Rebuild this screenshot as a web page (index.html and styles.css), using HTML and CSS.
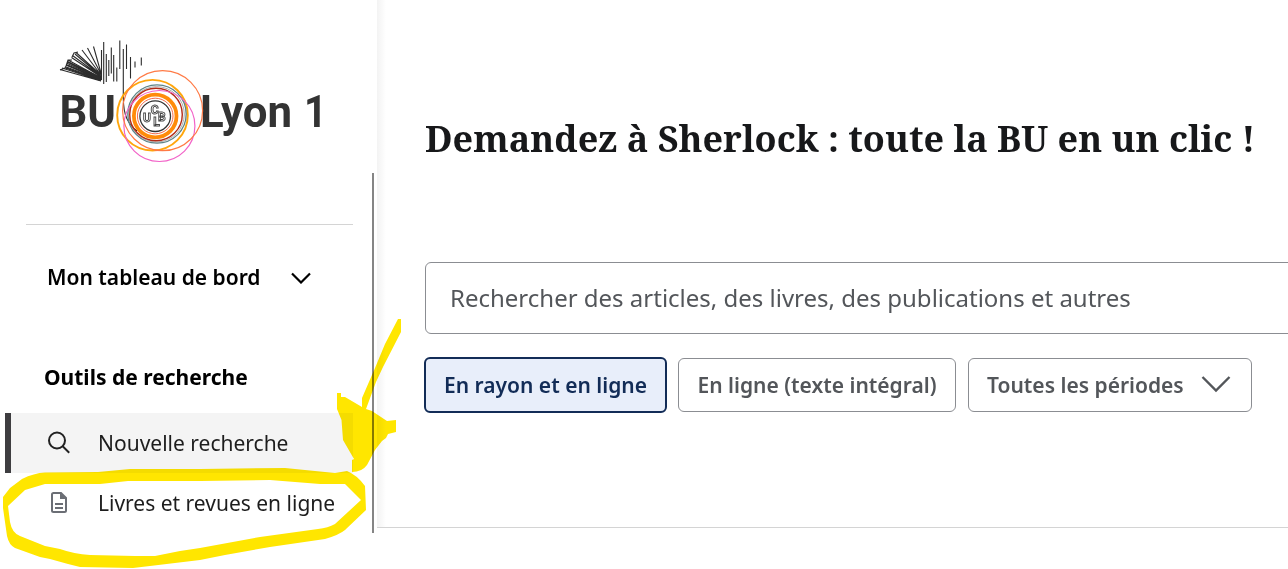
FILE: index.html
```html
<!DOCTYPE html>
<html lang="fr">
<head>
    <meta charset="UTF-8">
    <meta name="viewport" content="width=device-width, initial-scale=1.0">
    <title>BU Lyon 1</title>
    <link rel="stylesheet" href="styles.css">
</head>
<body>
    <div class="page">
        <aside class="sidebar">
            <svg class="logo" viewBox="40 30 300 145" width="300" height="145">
                <!-- livre ouvert -->
                <g class="logo-book">
                    <path d="M101 81L60 69.500M101 80.500L62 68M101 80L65 66.500M101 79.500L66 65M101 79L66.500 63M101 78.500L67 61.500M101 78L68 60M101 77L71.500 57.500M101 76.500L72.500 55.500M101 76L75 54M101 75L76 52.500M101 75L82 50M101 74L87.500 48M101 73L93.500 46.500M60 70L66 67.500M66 66L68 60L72 60M72 57L74 53L78 52"/>
                    <path class="thick" d="M66 68L101 80.500M67 65L101 79M68 62L101 78M90 75L101 80.500"/>
                    <path d="M103.700 42V84M101.500 50V80M106.300 54V82M108.800 60V76M111.300 47.500V73.500M113.700 55V81.500M116.800 67.500V81.500M119.800 40.500V69M126.500 44.500V69M130.500 57V78.500M135 61.500V67.500M141.300 57.500V65.500"/>
                    <path d="M123.300 49V98C123.500 116 128 124 137 131"/>
                </g>
                <text class="logo-text" x="59.500" y="126.500" textLength="56.500" lengthAdjust="spacingAndGlyphs">BU</text>
                <text class="logo-text" x="200" y="126.500" textLength="92" lengthAdjust="spacingAndGlyphs">Lyon</text>
                <text class="logo-text" x="304" y="126.500" textLength="23" lengthAdjust="spacingAndGlyphs">1</text>
                <g fill="none">
                    <circle cx="152.500" cy="115.200" r="35.300" stroke="#ffa60c" stroke-width="1.900"/>
                    <circle cx="157" cy="114" r="29.200" stroke="#5d8487" stroke-width="1.300"/>
                    <circle cx="156.600" cy="114.300" r="27.700" stroke="#777" stroke-width=".6"/>
                    <circle cx="156" cy="114.500" r="26.300" stroke="#b22a17" stroke-width="1.400"/>
                    <circle cx="159.400" cy="126" r="35.500" stroke="#f263c8" stroke-width="1.200"/>
                    <circle cx="162.600" cy="110.700" r="40" stroke="#ff7a45" stroke-width="1.200"/>
                    <circle cx="155.200" cy="116" r="21.300" stroke="#ff8b0a" stroke-width="3.800"/>
                    <circle cx="155.200" cy="116" r="17.800" stroke="#ef5a38" stroke-width=".9"/>
                    <circle cx="155.200" cy="116.200" r="15.300" stroke="#333" stroke-width="1.300"/>
                </g>
                <g class="logo-letters">
                    <text x="143" y="121.800">U</text>
                    <text x="150.800" y="114.200">C</text>
                    <text x="153.300" y="126">L</text>
                    <text x="158" y="121">B</text>
                </g>
            </svg>
            <hr class="separator">
            <div class="dashboard">
                <span>Mon tableau de bord</span>
                <svg width="20" height="12" viewBox="0 0 20 12"><path d="M1 1.500L10 10.500L19 1.500"/></svg>
            </div>
            <h2>Outils de recherche</h2>
            <nav>
                <a class="item active">
                    <svg width="24" height="24" viewBox="0 0 24 24"><circle cx="10" cy="9.500" r="8"/><path d="M15.700 15.200L22.200 21.700"/></svg>
                    <span>Nouvelle recherche</span>
                </a>
                <a class="item">
                    <svg class="doc" width="24" height="24" viewBox="0 0 24 24"><path d="M6 2H14L19 7V19.500Q19 21 17.500 21H6.500Q5 21 5 19.500V3.500Q5 2 6.500 2ZM8 13H16M8 17H16"/><path class="fold" d="M13 1.500V8H19.500Z"/></svg>
                    <span>Livres et revues en ligne</span>
                </a>
            </nav>
            <div class="scrollbar"></div>
        </aside>
        <main class="content">
            <h1>Demandez à Sherlock : toute la BU en un clic !</h1>
            <input class="search" type="text" placeholder="Rechercher des articles, des livres, des publications et autres">
            <div class="filters">
                <button class="selected">En rayon et en ligne</button>
                <button class="fulltext">En ligne (texte intégral)</button>
                <button class="period">
                    <span>Toutes les périodes</span>
                    <svg width="30" height="18" viewBox="0 0 30 18"><path d="M1.500 1L15 14.500L28.500 1"/></svg>
                </button>
            </div>
        </main>
    </div>

    <!-- surlignage -->
    <svg class="highlight" width="420" height="569" viewBox="0 0 420 569">
        <path fill-rule="evenodd" d="M3 497L10 488L22 479Q34 473 45 472.500L98 472L130 469H200L285 468L335 473L347 471Q357 475 365 486L366 510L345 530Q339 535 325 539L270 547L225 555L200 560L150 566L133 568L80 567L68 564L50 559L40 557L15 548Q9 545 7 536L5 522L3 508ZM8 506L25 490L45 484H100L128 481H200L270 480L320 484H345L361 500L335 524Q328 528 318 529L260 537L200 548L180 551L155 556H135L90 555Q74 554 60 549L45 546L20 536Q12 533 10 522Z"/>
        <path d="M398 319H401V332L383 367L376 382L366 409L372 411L387 421L396 420V432L388 434L386 438L382 441L375 450L367 465Q362 472 352 472V460L354 459L343 440L341.500 420L337 409V393H341V397H345L362 407V398L375 368L385 344Z"/>
    </svg>
</body>
</html>
```

FILE: styles.css
```css
body {
    margin: 0;
    background-color: white;
    font-family: "Noto Sans", "Open Sans", sans-serif;
    overflow: hidden;
}

.page {
    display: flex;
    height: 533px;
    overflow: hidden;
}

.sidebar {
    position: relative;
    width: 377px;
    flex-shrink: 0;
}

.logo {
    display: block;
    margin: 30px 0 0 40px;
}

.logo-book path {
    fill: none;
    stroke: #2c2c2c;
    stroke-width: 1.1;
}

.logo-book .thick {
    stroke-width: 1.5;
}

.logo-text {
    font-family: Roboto, sans-serif;
    font-size: 44px;
    font-weight: 700;
    fill: #333;
}

.logo-letters text {
    font-family: Roboto, sans-serif;
    font-size: 12px;
    font-weight: 700;
    fill: white;
    stroke: #444;
    stroke-width: 0.9;
}

.separator {
    height: 1px;
    margin: 49px 24px 0 26px;
    border: none;
    background-color: #d4d4d4;
}

.dashboard {
    display: flex;
    align-items: center;
    justify-content: space-between;
    height: 30px;
    margin: 37px 66px 0 47px;
    font-size: 21px;
    font-weight: 600;
}

.dashboard svg {
    margin-top: 1px;
}

.dashboard path {
    fill: none;
    stroke: black;
    stroke-width: 2.2;
}

.sidebar h2 {
    margin: 70px 0 0 44px;
    font-size: 21px;
    line-height: 30px;
    font-weight: 700;
}

nav {
    margin: 21px 24px 0 5px;
}

.item {
    display: flex;
    align-items: center;
    gap: 27px;
    height: 60px;
    padding-left: 42px;
    font-size: 21px;
    color: #1d1d1d;
}

.item.active {
    padding-left: 36px;
    border-left: 6px solid #3e3d40;
    background-color: #f4f4f4;
}

.item svg {
    fill: none;
    stroke: #222;
    stroke-width: 2;
}

.item .doc {
    stroke: #6b6e75;
}

.item .fold {
    fill: #6b6e75;
    stroke: none;
}

.scrollbar {
    position: absolute;
    top: 173px;
    right: 3px;
    width: 2px;
    height: 360px;
    background-color: #858585;
}

.content {
    flex: 1;
    min-width: 0;
    height: 527px;
    padding-left: 48px;
    border-bottom: 1px solid #d4d4d4;
    box-sizing: content-box;
    background: linear-gradient(to right, #f3f3f3, white 9px);
}

.content h1 {
    margin: 114px 0 0;
    font-family: "Noto Serif", "DejaVu Serif Condensed", "DejaVu Serif", serif;
    font-size: 36px;
    line-height: 50px;
    font-weight: 700;
    white-space: nowrap;
    color: #17181a;
}

.search {
    display: block;
    width: 900px;
    height: 72px;
    margin-top: 98px;
    padding: 0 24px 2px;
    border: 1px solid #8b8d92;
    border-radius: 6px;
    box-sizing: border-box;
    font-family: inherit;
    font-size: 24px;
}

.search::placeholder {
    color: #53565a;
    opacity: 1;
}

.filters {
    display: flex;
    align-items: center;
    gap: 11px;
    margin: 23px 0 0 -1px;
}

.filters button {
    height: 54px;
    padding: 0;
    border: 1px solid #8b8d92;
    border-radius: 6px;
    background-color: white;
    color: #53565a;
    font-family: inherit;
    font-size: 21px;
    font-weight: 600;
    white-space: nowrap;
}

.filters .selected {
    width: 243px;
    height: 56px;
    border: 2px solid #122c57;
    background-color: #e8eefa;
    color: #122c57;
}

.filters .fulltext {
    width: 278px;
}

.filters .period {
    display: flex;
    align-items: center;
    justify-content: space-between;
    width: 284px;
    margin-left: 1px;
    padding: 0 20px 0 18px;
}

.period path {
    fill: none;
    stroke: #53565a;
    stroke-width: 2.4;
}

.highlight {
    position: absolute;
    top: 0;
    left: 0;
    fill: #ffe600;
    mix-blend-mode: multiply;
    pointer-events: none;
}
```
